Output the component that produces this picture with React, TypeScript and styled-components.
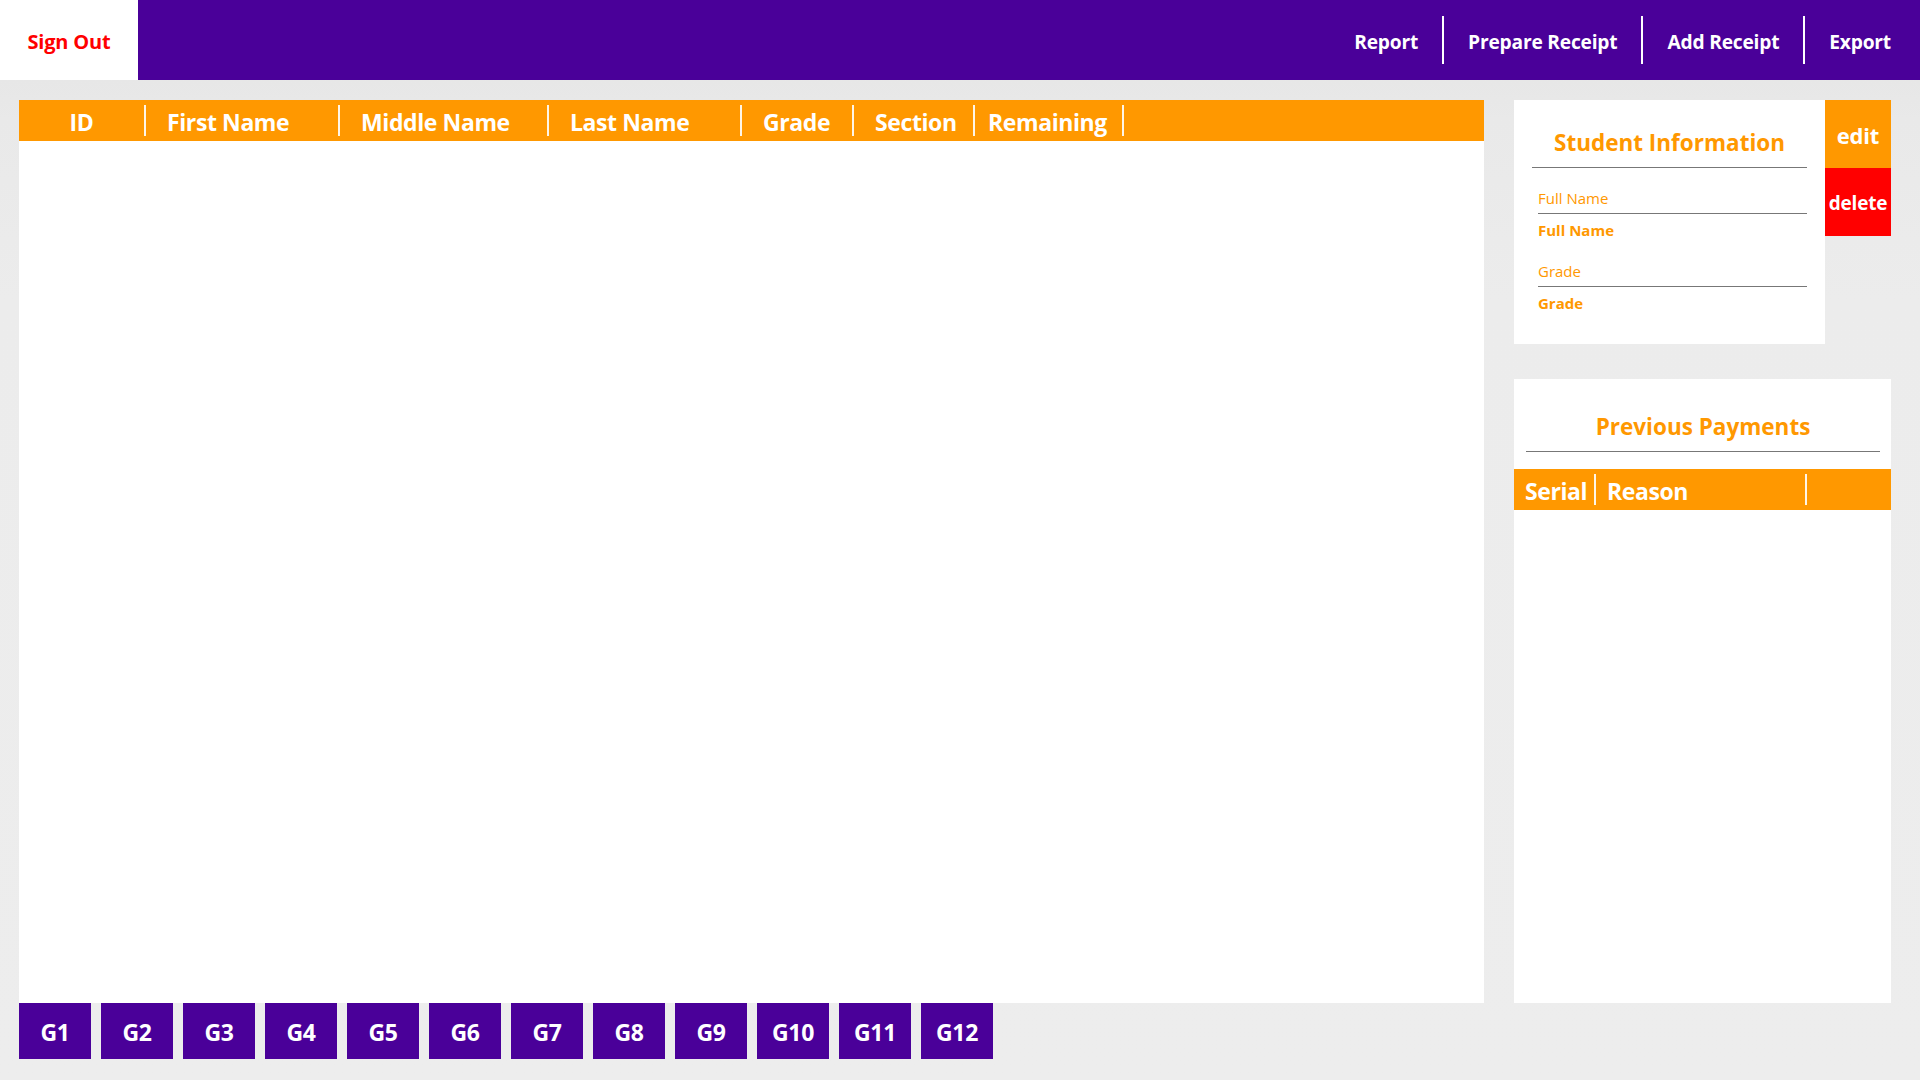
import React from "react";
import styled, { createGlobalStyle } from "styled-components";

const GlobalStyle = createGlobalStyle`
  html, body {
    margin: 0;
    padding: 0;
    background: #ececec;
    font-family: "Open Sans", "Noto Sans", "Liberation Sans", sans-serif;
  }
  * { box-sizing: border-box; }
`;

const PURPLE = "#4a0099";
const ORANGE = "#ff9800";

const Page = styled.div`
  width: 1920px;
  height: 1080px;
  display: flex;
  flex-direction: column;
  background: linear-gradient(180deg, #e3e3e3 0px, #e9e9e9 120px, #ececec 300px, #ededed 100%);
  overflow: hidden;
`;

const TopBar = styled.header`
  height: 80px;
  flex: none;
  display: flex;
  align-items: center;
  background: ${PURPLE};
`;

const SignOut = styled.button`
  width: 138px;
  height: 80px;
  border: none;
  background: #ffffff;
  color: #ff0000;
  font-family: inherit;
  font-size: 20px;
  font-weight: 700;
  letter-spacing: -0.2px;
  padding: 2px 0 0;
  cursor: pointer;
`;

const Nav = styled.nav`
  margin-left: auto;
  display: flex;
  align-items: center;
  height: 100%;
  padding-right: 29px;
`;

const NavButton = styled.button`
  border: none;
  background: transparent;
  color: #ffffff;
  font-family: inherit;
  font-size: 19.2px;
  font-weight: 700;
  letter-spacing: -0.2px;
  padding: 3px 24px 0;
  height: 100%;
  cursor: pointer;
  &:last-child { padding-right: 0; }
`;

const NavDivider = styled.span`
  width: 2px;
  height: 48px;
  background: #ffffff;
`;

const Main = styled.main`
  flex: none;
  display: flex;
  align-items: flex-start;
  gap: 30px;
  padding: 20px 29px 0 19px;
`;

const LeftColumn = styled.section`
  width: 1465px;
  display: flex;
  flex-direction: column;
`;

const Table = styled.div`
  height: 903px;
  background: #ffffff;
  display: flex;
  flex-direction: column;
`;

const HeaderRow = styled.div`
  height: 41px;
  flex: none;
  display: flex;
  align-items: center;
  background: ${ORANGE};
`;

const HeaderCell = styled.div<{ $w: number; $pad?: number; $center?: boolean }>`
  width: ${(p) => p.$w}px;
  flex: none;
  padding-top: 2px;
  padding-left: ${(p) => (p.$center ? 0 : p.$pad ?? 21)}px;
  text-align: ${(p) => (p.$center ? "center" : "left")};
  color: #ffffff;
  font-size: 23px;
  font-weight: 700;
  letter-spacing: -0.4px;
  white-space: nowrap;
`;

const HeaderSep = styled.span`
  width: 2px;
  height: 31px;
  flex: none;
  background: rgba(255, 255, 255, 0.9);
`;

const GradeRow = styled.div`
  display: flex;
  gap: 10px;
  height: 56px;
`;

const GradeButton = styled.button`
  width: 72px;
  height: 56px;
  border: none;
  background: ${PURPLE};
  color: #ffffff;
  font-family: inherit;
  font-size: 23px;
  font-weight: 700;
  letter-spacing: -0.3px;
  padding: 2px 0 0;
  cursor: pointer;
`;

const RightColumn = styled.aside`
  width: 377px;
  height: 903px;
  display: flex;
  flex-direction: column;
  gap: 35px;
`;

const InfoRow = styled.div`
  display: flex;
  align-items: flex-start;
  flex: none;
`;

const InfoCard = styled.div`
  width: 311px;
  height: 244px;
  background: #ffffff;
  padding: 0 18px;
`;

const CardTitle = styled.h2<{ $top: number; $bottom: number }>`
  margin: 0;
  padding: ${(p) => p.$top}px 0 ${(p) => p.$bottom}px;
  line-height: 30px;
  font-size: 22.5px;
  font-weight: 700;
  color: ${ORANGE};
  text-align: center;
  border-bottom: 1px solid #777777;
`;

const Fields = styled.div`
  padding-left: 6px;
  margin-top: 20px;
  display: flex;
  flex-direction: column;
  gap: 21px;
`;

const Field = styled.div`
  display: flex;
  flex-direction: column;
`;

const FieldLabel = styled.div`
  line-height: 20px;
  font-size: 15px;
  font-weight: 400;
  color: ${ORANGE};
  padding-bottom: 5px;
  border-bottom: 1px solid #777777;
`;

const FieldValue = styled.div`
  margin-top: 6px;
  line-height: 20px;
  font-size: 15px;
  font-weight: 700;
  color: ${ORANGE};
`;

const ActionColumn = styled.div`
  display: flex;
  flex-direction: column;
`;

const ActionButton = styled.button<{ $bg: string; $size: number }>`
  width: 66px;
  height: 68px;
  border: none;
  background: ${(p) => p.$bg};
  color: #ffffff;
  font-family: inherit;
  font-size: ${(p) => p.$size}px;
  font-weight: 700;
  letter-spacing: -0.2px;
  padding: 2px 0 0;
  cursor: pointer;
`;

const PaymentsCard = styled.div`
  flex: 1;
  background: #ffffff;
  display: flex;
  flex-direction: column;
`;

const PaymentsTitleWrap = styled.div`
  padding: 0 11px 0 12px;
`;

const PaymentsHeader = styled(HeaderRow)`
  margin-top: 17px;
`;

const columns = [
  { label: "ID", w: 125, center: true },
  { label: "First Name", w: 192 },
  { label: "Middle Name", w: 207 },
  { label: "Last Name", w: 191 },
  { label: "Grade", w: 110 },
  { label: "Section", w: 119 },
  { label: "Remaining", w: 147, pad: 13 },
];

const grades = Array.from({ length: 12 }, (_, i) => `G${i + 1}`);

export default function App() {
  return (
    <>
      <GlobalStyle />
      <Page>
        <TopBar>
          <SignOut>Sign Out</SignOut>
          <Nav>
            <NavButton>Report</NavButton>
            <NavDivider />
            <NavButton>Prepare Receipt</NavButton>
            <NavDivider />
            <NavButton>Add Receipt</NavButton>
            <NavDivider />
            <NavButton>Export</NavButton>
          </Nav>
        </TopBar>
        <Main>
          <LeftColumn>
            <Table>
              <HeaderRow>
                {columns.map((c) => (
                  <React.Fragment key={c.label}>
                    <HeaderCell $w={c.w} $pad={c.pad} $center={c.center}>
                      {c.label}
                    </HeaderCell>
                    <HeaderSep />
                  </React.Fragment>
                ))}
              </HeaderRow>
            </Table>
            <GradeRow>
              {grades.map((g) => (
                <GradeButton key={g}>{g}</GradeButton>
              ))}
            </GradeRow>
          </LeftColumn>
          <RightColumn>
            <InfoRow>
              <InfoCard>
                <CardTitle $top={28} $bottom={9}>Student Information</CardTitle>
                <Fields>
                  <Field>
                    <FieldLabel>Full Name</FieldLabel>
                    <FieldValue>Full Name</FieldValue>
                  </Field>
                  <Field>
                    <FieldLabel>Grade</FieldLabel>
                    <FieldValue>Grade</FieldValue>
                  </Field>
                </Fields>
              </InfoCard>
              <ActionColumn>
                <ActionButton $bg={ORANGE} $size={22}>edit</ActionButton>
                <ActionButton $bg="#ff0000" $size={19}>delete</ActionButton>
              </ActionColumn>
            </InfoRow>
            <PaymentsCard>
              <PaymentsTitleWrap>
                <CardTitle $top={33} $bottom={9}>Previous Payments</CardTitle>
              </PaymentsTitleWrap>
              <PaymentsHeader>
                <HeaderCell $w={80} $pad={11}>Serial</HeaderCell>
                <HeaderSep />
                <HeaderCell $w={209} $pad={11}>Reason</HeaderCell>
                <HeaderSep />
              </PaymentsHeader>
            </PaymentsCard>
          </RightColumn>
        </Main>
      </Page>
    </>
  );
}
